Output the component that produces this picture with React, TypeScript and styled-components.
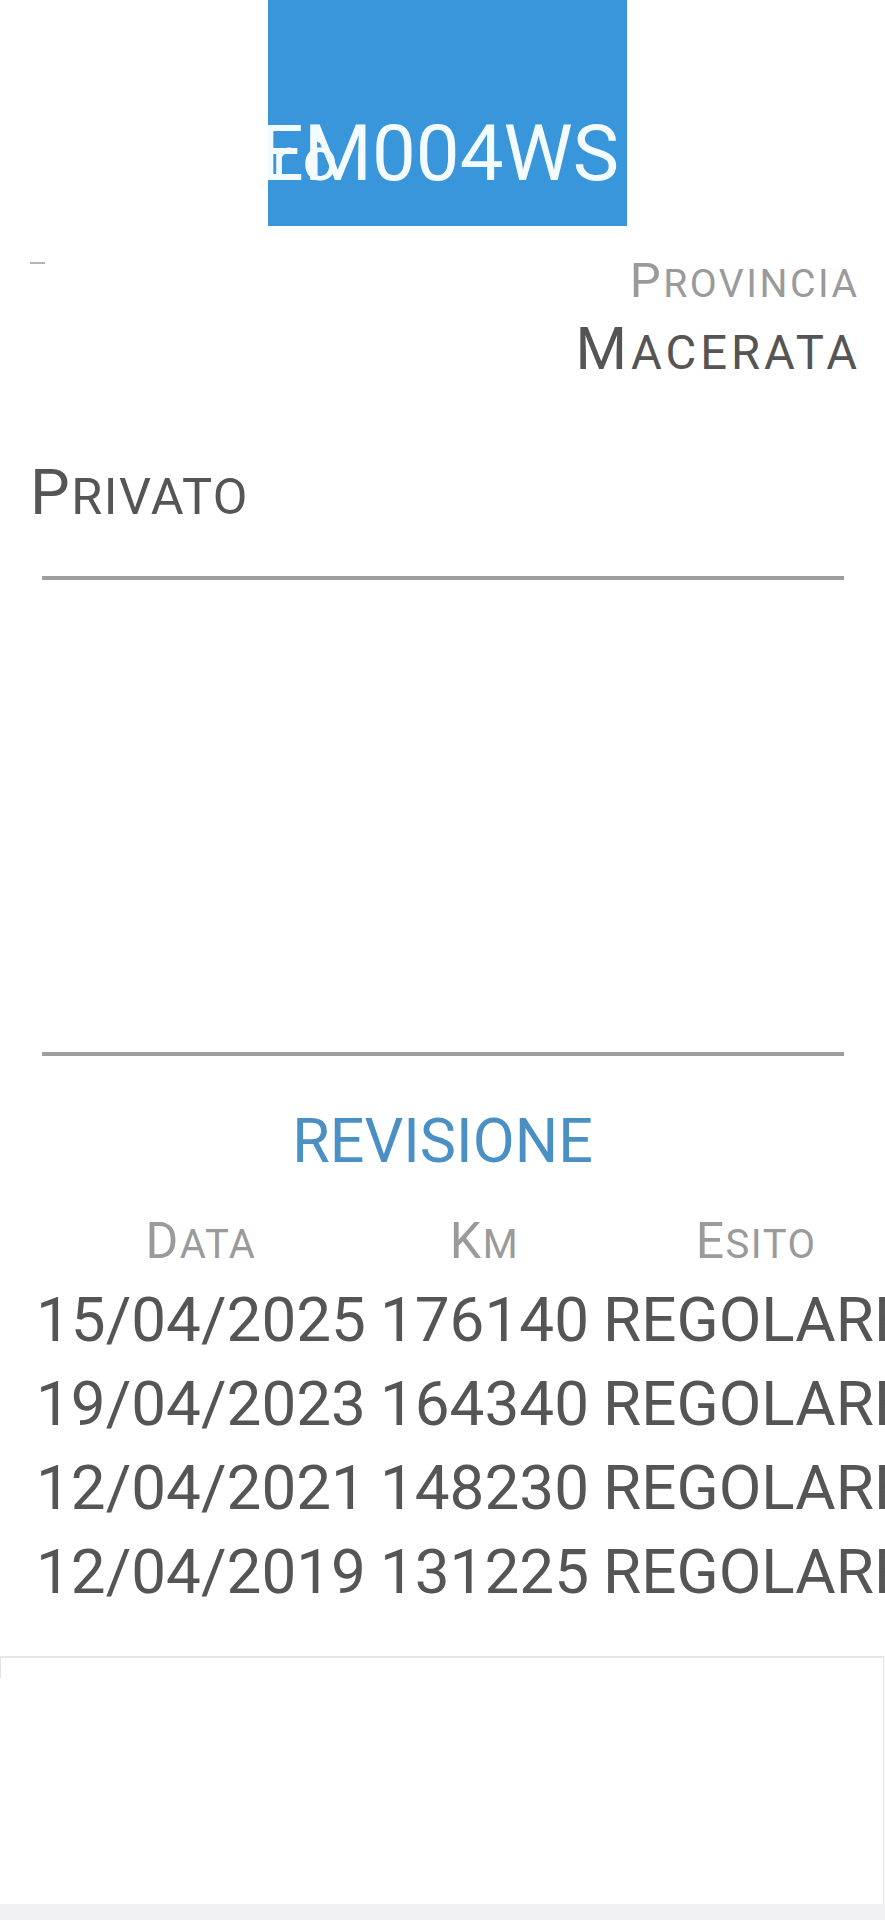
import React from "react";
import styled, { createGlobalStyle } from "styled-components";

const GlobalStyle = createGlobalStyle`
  html, body {
    margin: 0;
    padding: 0;
    background: #ffffff;
  }
  body {
    font-family: Roboto, "Noto Sans", "Liberation Sans", sans-serif;
  }
`;

const Page = styled.div`
  width: 885px;
  min-height: 1920px;
  overflow: hidden;
  display: flex;
  flex-direction: column;
  background: #ffffff;
  font-family: Roboto, "Noto Sans", "Liberation Sans", sans-serif;
`;

const Plate = styled.div`
  position: relative;
  margin-left: 268px;
  width: 359px;
  height: 226px;
  box-sizing: border-box;
  padding: 115px 8px 0 0;
  background: #3996db;
  overflow: hidden;
  display: flex;
  justify-content: flex-end;
`;

const PlateText = styled.span`
  font-size: 78px;
  line-height: 78px;
  color: #f4fbff;
  white-space: nowrap;
`;

const PlateGhost = styled.span`
  position: absolute;
  left: 4px;
  top: 128px;
  font-size: 62px;
  line-height: 62px;
  letter-spacing: 10px;
  color: #f4fbff;
  white-space: nowrap;
`;

/* small-caps rendering: first letter full size, rest as reduced capitals */
const CapsRest = styled.span`
  font-size: 0.8em;
  line-height: 0;
  text-transform: uppercase;
`;

const SmallCaps = ({ text }: { text: string }) => (
  <>
    {text.charAt(0).toUpperCase()}
    <CapsRest>{text.slice(1)}</CapsRest>
  </>
);

const InfoRow = styled.div`
  display: flex;
  justify-content: space-between;
  align-items: flex-start;
  margin-top: 26px;
  padding: 0 28px 0 30px;
`;

const Dash = styled.div`
  width: 15px;
  height: 2px;
  margin-top: 10px;
  background: #b5b5b5;
`;

const FieldBlock = styled.div`
  display: flex;
  flex-direction: column;
  align-items: flex-end;
`;

const FieldLabel = styled.div`
  font-size: 49px;
  line-height: 58px;
  letter-spacing: 2.5px;
  margin-right: -2.5px;
  color: #9a9a9a;
  white-space: nowrap;
`;

const FieldValue = styled.div`
  margin-top: 5px;
  margin-right: -4px;
  font-size: 59px;
  line-height: 68px;
  letter-spacing: 4px;
  color: #555555;
  white-space: nowrap;
`;

const Owner = styled.div`
  margin-top: 73px;
  padding-left: 30px;
  font-size: 63px;
  line-height: 74px;
  letter-spacing: 1.5px;
  color: #555555;
`;

const Rule = styled.div<{ $gap: number }>`
  margin: ${(p) => p.$gap}px 0 0 42px;
  width: 802px;
  height: 4px;
  background: #9e9e9e;
`;

const SectionTitle = styled.div`
  margin-top: 49px;
  text-align: center;
  font-size: 61px;
  line-height: 72px;
  color: #4b90c4;
`;

const Table = styled.div`
  margin-top: 34px;
  padding-left: 36px;
  display: grid;
  grid-template-columns: max-content max-content max-content;
  column-gap: 14px;
  width: max-content;
  white-space: nowrap;
`;

const HeadCell = styled.div`
  justify-self: center;
  font-size: 50px;
  line-height: 60px;
  letter-spacing: 1.5px;
  color: #9a9a9a;
  margin-bottom: 7px;
`;

const Cell = styled.div`
  font-size: 62px;
  line-height: 84px;
  color: #555555;
`;

const BottomPanel = styled.div`
  position: relative;
  margin-top: 42px;
  height: 248px;
  box-sizing: border-box;
  margin-right: 1px;
  border-top: 2px solid #e6e6e6;
  border-right: 1px solid #e2e2e2;
  background: #ffffff;

  &::before {
    content: "";
    position: absolute;
    left: 0;
    top: 0;
    width: 1px;
    height: 20px;
    background: #e2e2e2;
  }
`;

const FooterBand = styled.div`
  flex: 1;
  min-height: 15px;
  background: #f0f0f2;
`;

const rows = [
  ["15/04/2025", "176140", "REGOLARE"],
  ["19/04/2023", "164340", "REGOLARE"],
  ["12/04/2021", "148230", "REGOLARE"],
  ["12/04/2019", "131225", "REGOLARE"],
];

export default function App() {
  return (
    <>
      <GlobalStyle />
      <Page>
        <Plate>
          <PlateText>EM004WS</PlateText>
          <PlateGhost>rò</PlateGhost>
        </Plate>
        <InfoRow>
          <Dash />
          <FieldBlock>
            <FieldLabel>
              <SmallCaps text="Provincia" />
            </FieldLabel>
            <FieldValue>
              <SmallCaps text="Macerata" />
            </FieldValue>
          </FieldBlock>
        </InfoRow>
        <Owner>
          <SmallCaps text="Privato" />
        </Owner>
        <Rule $gap={46} />
        <Rule $gap={472} />
        <SectionTitle>REVISIONE</SectionTitle>
        <Table>
          <HeadCell>
            <SmallCaps text="Data" />
          </HeadCell>
          <HeadCell>
            <SmallCaps text="Km" />
          </HeadCell>
          <HeadCell>
            <SmallCaps text="Esito" />
          </HeadCell>
          {rows.map((r, i) => (
            <React.Fragment key={i}>
              <Cell>{r[0]}</Cell>
              <Cell>{r[1]}</Cell>
              <Cell>{r[2]}</Cell>
            </React.Fragment>
          ))}
        </Table>
        <BottomPanel />
        <FooterBand />
      </Page>
    </>
  );
}
